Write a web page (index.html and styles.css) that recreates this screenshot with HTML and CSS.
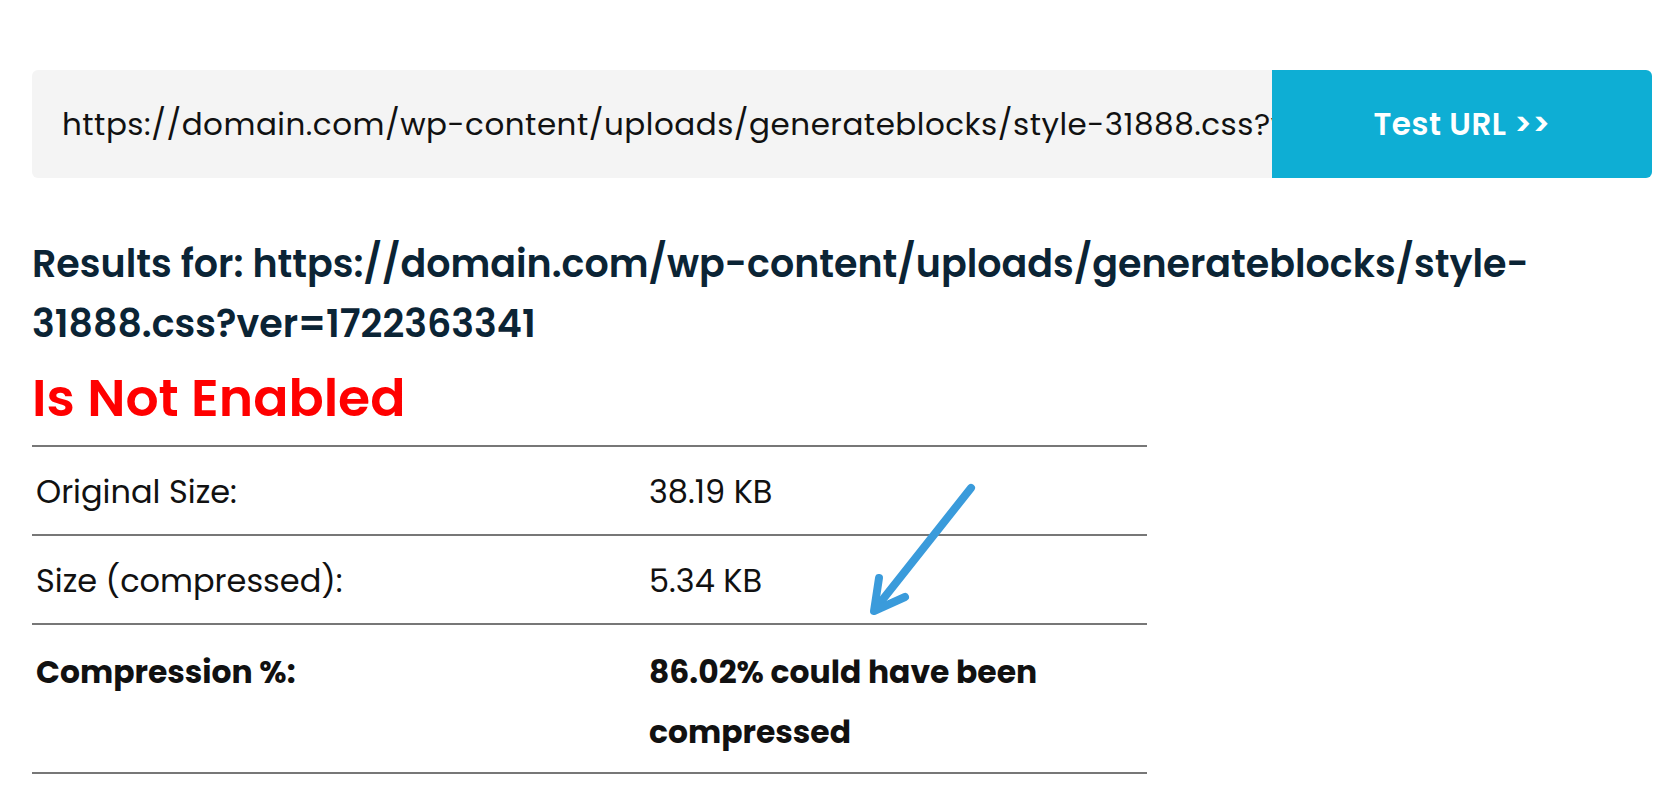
FILE: index.html
```html
<!DOCTYPE html>
<html lang="en">
<head>
<meta charset="utf-8">
<title>Gzip Test</title>
<link rel="stylesheet" href="styles.css">
</head>
<body>
<main class="page">
  <form class="test-form">
    <input class="url-input" type="text" value="https://domain.com/wp-content/uploads/generateblocks/style-31888.css?ver=1722363341" readonly>
    <button class="test-btn" type="button">Test URL &gt;&gt;</button>
  </form>
  <section class="results">
    <h2 class="results-title">Results for: https://domain.com/wp-content/uploads/generateblocks/style-31888.css?ver=1722363341</h2>
    <h3 class="status">Is Not Enabled</h3>
    <table class="result-table">
      <tr><td class="label">Original Size:</td><td class="value">38.19 KB</td></tr>
      <tr><td class="label">Size (compressed):</td><td class="value">5.34 KB</td></tr>
      <tr class="strong"><td class="label">Compression %:</td><td class="value">86.02% could have been compressed</td></tr>
    </table>
    <svg class="arrow" width="130" height="150" viewBox="860 480 130 150">
      <path d="M968 488 L873 608" fill="none" stroke="#3a9bdb" stroke-width="8" stroke-linecap="round"/>
      <path d="M876 578 L871 611 L902 597" fill="none" stroke="#3a9bdb" stroke-width="8" stroke-linecap="round" stroke-linejoin="round"/>
    </svg>
  </section>
</main>
</body>
</html>
```
FILE: styles.css
```css
* { box-sizing: border-box; }
html, body { margin: 0; padding: 0; background: #ffffff; }
body { font-family: "Poppins", "Inter", "Liberation Sans", sans-serif; color: #111; }

.page {
  padding: 70px 24px 0 32px;
  position: relative;
}

.test-form {
  display: flex;
  width: 1620px;
  height: 108px;
  margin: 0;
}

.url-input {
  flex: 1;
  min-width: 0;
  border: none;
  outline: none;
  background: #f4f4f4;
  border-radius: 6px 0 0 6px;
  padding: 0 0 0 30px;
  font-family: inherit;
  font-size: 31px;
  letter-spacing: 0.5px;
  color: #111;
}

.test-btn {
  width: 380px;
  border: none;
  background: #0eaed4;
  color: #fff;
  border-radius: 0 6px 6px 0;
  font-family: inherit;
  font-size: 31px;
  font-weight: 600;
  letter-spacing: 0.5px;
  padding: 0;
}

.results { position: relative; }

.results-title {
  margin: 56px 0 0 0;
  font-size: 38px;
  line-height: 60px;
  font-weight: 600;
  color: #0b2435;
  width: 1620px;
}

.status {
  margin: 14px 0 17px 0;
  font-size: 52px;
  line-height: 60px;
  font-weight: 600;
  color: #ff0000;
}

.result-table {
  width: 1115px;
  border-collapse: collapse;
  border-top: 2px solid #777;
}

.result-table td {
  border-bottom: 2px solid #777;
  font-size: 32px;
  line-height: 60px;
  padding: 15px 4px 12px 4px;
  vertical-align: top;
  color: #111;
}

.result-table .label { width: 613px; }

.result-table .strong td {
  font-weight: 700;
  font-size: 31.4px;
  padding: 17px 4px 10px 4px;
}

.arrow {
  position: absolute;
  left: 831px;
  top: 246px;
}
```
